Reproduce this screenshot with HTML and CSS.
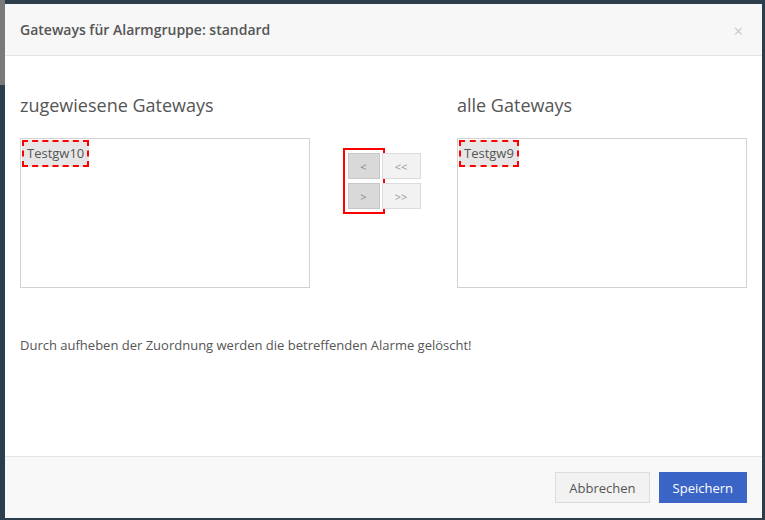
FILE: index.html
```html
<!DOCTYPE html>
<html lang="de">
<head>
<meta charset="UTF-8">
<title>Gateways für Alarmgruppe</title>
<link rel="stylesheet" href="styles.css">
</head>
<body>

<div class="backdrop"></div>

<div class="modal">
	<div class="modal-header">
		<h4>Gateways für Alarmgruppe: standard</h4>
		<span class="close">&times;</span>
	</div>
	<div class="modal-body">
		<div class="picker">
			<div class="side">
				<h3>zugewiesene Gateways</h3>
				<div class="listbox">
					<div class="option">Testgw10</div>
				</div>
			</div>
			<div class="mover">
				<div class="col single">
					<button>&lt;</button>
					<button>&gt;</button>
				</div>
				<div class="col">
					<button>&lt;&lt;</button>
					<button>&gt;&gt;</button>
				</div>
			</div>
			<div class="side">
				<h3>alle Gateways</h3>
				<div class="listbox">
					<div class="option">Testgw9</div>
				</div>
			</div>
		</div>
		<p class="hint">Durch aufheben der Zuordnung werden die betreffenden Alarme gelöscht!</p>
	</div>
	<div class="modal-footer">
		<button class="btn">Abbrechen</button>
		<button class="btn primary">Speichern</button>
	</div>
</div>

</body>
</html>
```

FILE: styles.css
```css
* {
	box-sizing: border-box;
	margin: 0;
	padding: 0;
}
html, body {
	height: 100%;
	background: #2c3d4c;
	font-family: "Open Sans", sans-serif;
	color: #555;
}
.backdrop {
	position: fixed;
	left: 0;
	top: 0;
	width: 5px;
	height: 85px;
	background: #7a7a7a;
}

.modal {
	position: fixed;
	left: 5px;
	top: 4px;
	width: 757px;
	height: 514px;
	background: #fff;
	display: flex;
	flex-direction: column;
}

.modal-header {
	height: 52px;
	background: #f7f7f7;
	border-bottom: 1px solid #e5e5e5;
	padding: 0 15px;
	display: flex;
	align-items: center;
	justify-content: space-between;
}
.modal-header h4 {
	font-size: 14px;
	font-weight: 600;
	color: #555;
	margin-top: -1px;
}
.close {
	color: #c8c8c8;
	font-size: 16px;
	margin-top: 2px;
	margin-right: 4px;
}

.modal-body {
	height: 401px;
	padding: 0 15px;
	border-bottom: 1px solid #e5e5e5;
}

.picker {
	display: grid;
	grid-template-columns: 290px 147px 290px;
	margin-top: 37px;
}
.side h3 {
	font-size: 18px;
	font-weight: 400;
	color: #555;
	line-height: 25px;
	margin-bottom: 20px;
}
.listbox {
	height: 150px;
	border: 1px solid #d2d2d2;
	padding: 1px;
}
.option {
	display: inline-block;
	background: #e6e6e6;
	border: 2px dashed #f00;
	font-size: 13px;
	line-height: 23px;
	padding: 0 3px 0 3px;
}

.mover {
	display: flex;
	justify-content: center;
	align-items: flex-start;
	gap: 2px;
	padding-top: 60px;
	padding-left: 1px;
}
.mover .col {
	display: flex;
	flex-direction: column;
	gap: 4px;
}
.mover .single {
	outline: 2px solid #f00;
	outline-offset: 3px;
}
.mover button {
	width: 39px;
	height: 26px;
	background: #f2f2f2;
	border: 1px solid #dcdcdc;
	color: #999;
	font-family: "Open Sans", sans-serif;
	font-size: 11px;
}
.mover .single button {
	width: 32px;
	background: #d9d9d9;
	border-color: #c8c8c8;
	color: #888;
}

.hint {
	font-size: 13px;
	margin-top: 48px;
}

.modal-footer {
	flex: 1;
	background: #f8f8f8;
	display: flex;
	justify-content: flex-end;
	align-items: flex-start;
	gap: 9px;
	padding: 15px 15px 0 0;
}
.btn {
	height: 31px;
	padding: 0 13px;
	font-family: "Open Sans", sans-serif;
	font-size: 13px;
	background: #f2f2f2;
	border: 1px solid #dcdcdc;
	color: #555;
}
.btn.primary {
	background: #3a65c6;
	border-color: #3a65c6;
	color: #fff;
}
```
